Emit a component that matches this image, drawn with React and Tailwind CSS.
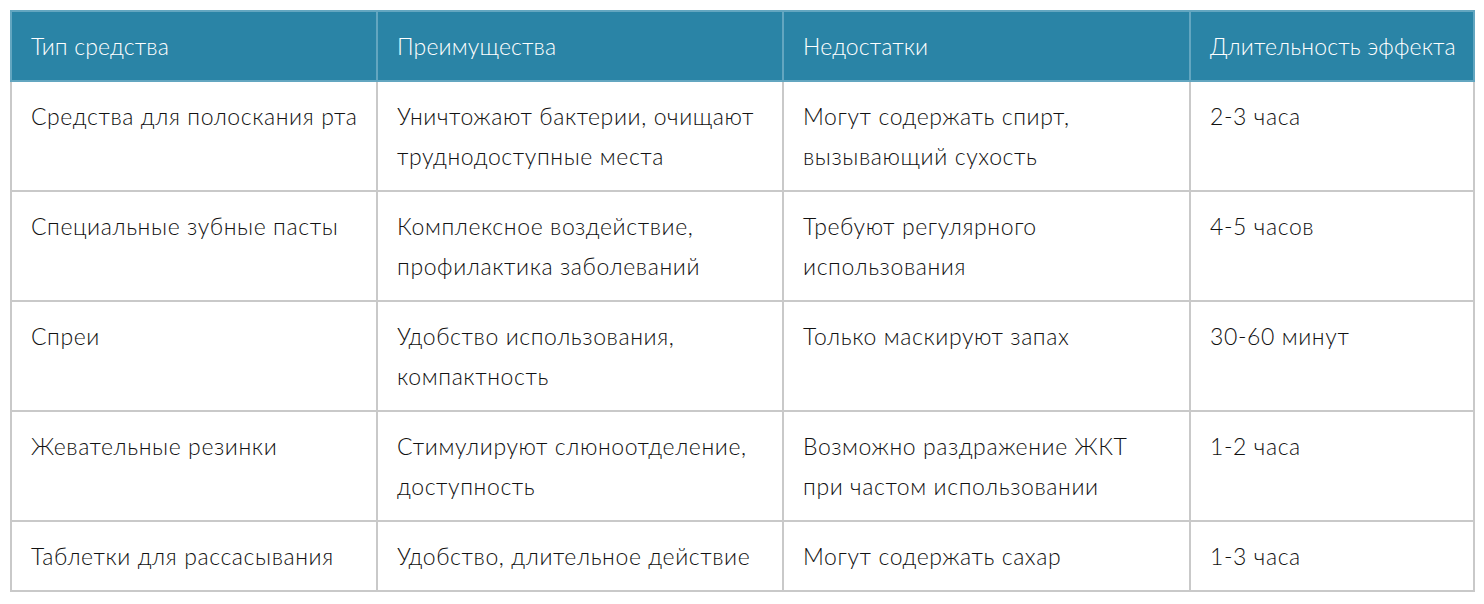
const HEADERS = ["Тип средства", "Преимущества", "Недостатки", "Длительность эффекта"];

const ROWS = [
  [
    "Средства для полоскания рта",
    "Уничтожают бактерии, очищают труднодоступные места",
    "Могут содержать спирт, вызывающий сухость",
    "2-3 часа",
  ],
  [
    "Специальные зубные пасты",
    "Комплексное воздействие, профилактика заболеваний",
    "Требуют регулярного использования",
    "4-5 часов",
  ],
  ["Спреи", "Удобство использования, компактность", "Только маскируют запах", "30-60 минут"],
  [
    "Жевательные резинки",
    "Стимулируют слюноотделение, доступность",
    "Возможно раздражение ЖКТ при частом использовании",
    "1-2 часа",
  ],
  ["Таблетки для рассасывания", "Удобство, длительное действие", "Могут содержать сахар", "1-3 часа"],
];

const WIDTHS = ["w-[366px]", "w-[406px]", "w-[407px]", "w-[284px]"];
const PAD_RIGHT = ["pr-[8px]", "pr-[12px]", "pr-[30px]", "pr-[8px]"];

export default function App() {
  return (
    <div className="min-h-screen bg-white pl-[10px] pt-[10px]" style={{ fontFamily: "Lato, 'Noto Sans', sans-serif" }}>
      <table className="table-fixed border-collapse w-[1465px]">
        <colgroup>
          {WIDTHS.map((w) => (
            <col key={w} className={w} />
          ))}
        </colgroup>
        <thead>
          <tr className="bg-[#2a84a6]">
            {HEADERS.map((h, j) => (
              <th
                key={h}
                className={`border-2 border-[#63a6c0] pl-[19px] ${PAD_RIGHT[j]} py-[14px] text-left align-top text-[23px] leading-[40px] font-light tracking-[0.15px] text-white`}
              >
                {h}
              </th>
            ))}
          </tr>
        </thead>
        <tbody>
          {ROWS.map((row, i) => (
            <tr key={i}>
              {row.map((cell, j) => (
                <td
                  key={j}
                  className={`border-2 border-[#c9c9c9] pl-[19px] ${PAD_RIGHT[j]} py-[14px] align-top text-[23px] leading-[40px] font-light tracking-[0.6px] text-[#111]`}
                >
                  {cell}
                </td>
              ))}
            </tr>
          ))}
        </tbody>
      </table>
    </div>
  );
}
